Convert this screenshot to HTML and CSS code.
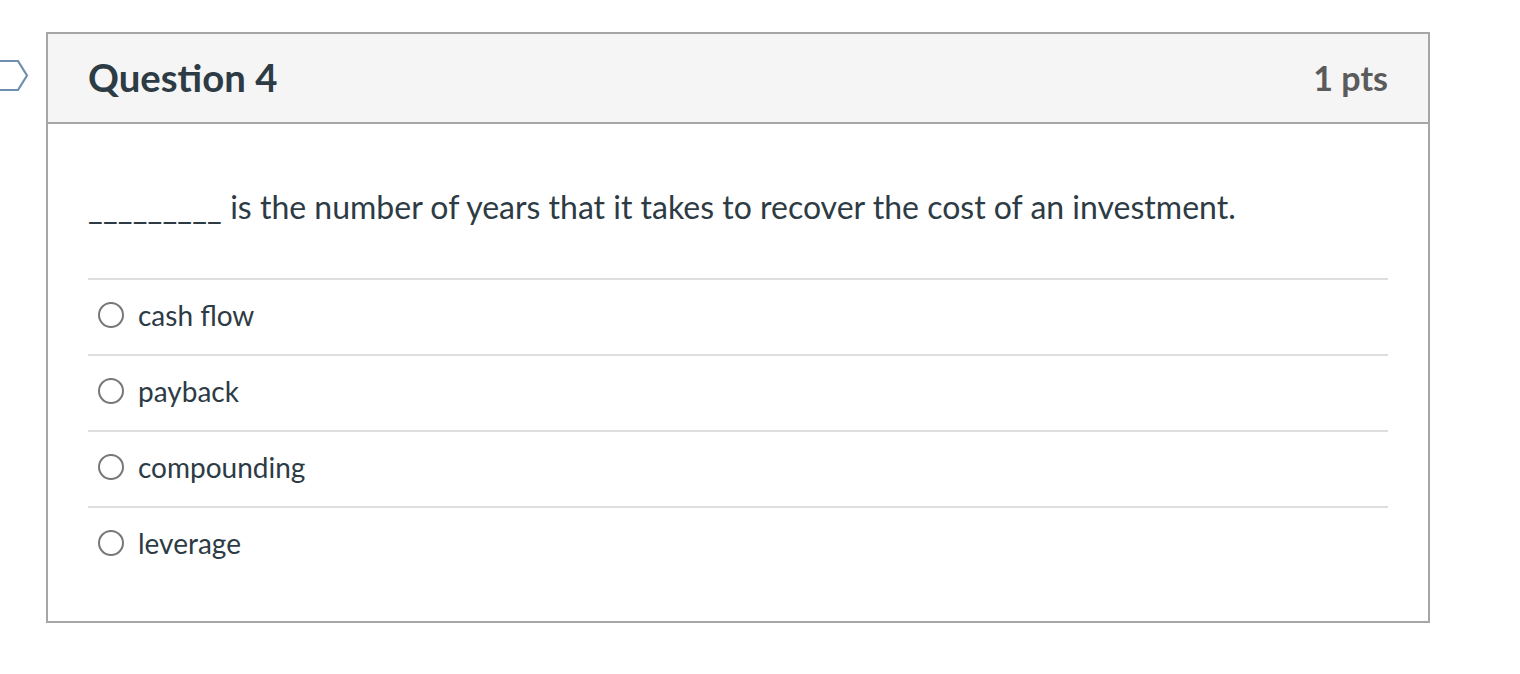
FILE: index.html
```html
<!DOCTYPE html>
<html>
<head>
<meta charset="utf-8">
<link rel="stylesheet" href="styles.css">
</head>
<body>
<div class="page">
  <div class="flag-col">
    <svg class="flag" width="46" height="40" viewBox="0 0 46 40">
      <path d="M-2 1 H18 L27 15.5 L18 30 H-2" fill="none" stroke="#6f8fae" stroke-width="2.2" stroke-linejoin="miter"/>
    </svg>
  </div>
  <div class="card">
    <div class="header">
      <h2 class="title">Question 4</h2>
      <div class="pts">1 pts</div>
    </div>
    <div class="body">
      <div class="question-text"><span class="blank">_________</span> is the number of years that it takes to recover the cost of an investment.</div>
      <div class="answers">
        <label class="answer"><span class="radio"></span><span class="answer-text">cash flow</span></label>
        <label class="answer"><span class="radio"></span><span class="answer-text">payback</span></label>
        <label class="answer"><span class="radio"></span><span class="answer-text">compounding</span></label>
        <label class="answer"><span class="radio"></span><span class="answer-text">leverage</span></label>
      </div>
    </div>
  </div>
</div>
</body>
</html>
```

FILE: styles.css
```css
html, body {
  margin: 0;
  padding: 0;
  background: #ffffff;
  font-family: Lato, "Open Sans", "Liberation Sans", sans-serif;
  color: #2d3b45;
}

.page {
  display: flex;
  align-items: flex-start;
  padding-top: 32px;
}

.flag-col {
  width: 46px;
  flex: 0 0 46px;
  padding-top: 28px;
}

.flag {
  display: block;
  overflow: visible;
}

.card {
  width: 1380px;
  border: 2px solid #a6a6a6;
  background: #ffffff;
}

.header {
  display: flex;
  align-items: center;
  justify-content: space-between;
  height: 88px;
  padding: 0 40px;
  background: #f5f5f5;
  border-bottom: 2px solid #a6a6a6;
}

.title {
  margin: 0;
  font-size: 38.3px;
  font-weight: 700;
  color: #2d3b45;
  margin-top: -2px;
}

.pts {
  font-size: 34px;
  font-weight: 700;
  color: #5b5b5b;
  margin-top: -2px;
}

.body {
  padding: 0 40px 39px;
}

.question-text {
  font-size: 32px;
  line-height: 48px;
  padding: 59px 0 47px;
}

.blank {
  letter-spacing: 0.2px;
}

.answers {
  display: flex;
  flex-direction: column;
}

.answer {
  display: flex;
  align-items: center;
  height: 70px;
  padding-bottom: 4px;
  border-top: 2px solid #dedede;
}

.radio {
  width: 22px;
  height: 22px;
  border: 2px solid #777777;
  border-radius: 50%;
  margin-left: 10px;
  margin-right: 14px;
  box-sizing: content-box;
  flex: 0 0 auto;
}

.answer-text {
  font-size: 28px;
  color: #2d3b45;
}
```
